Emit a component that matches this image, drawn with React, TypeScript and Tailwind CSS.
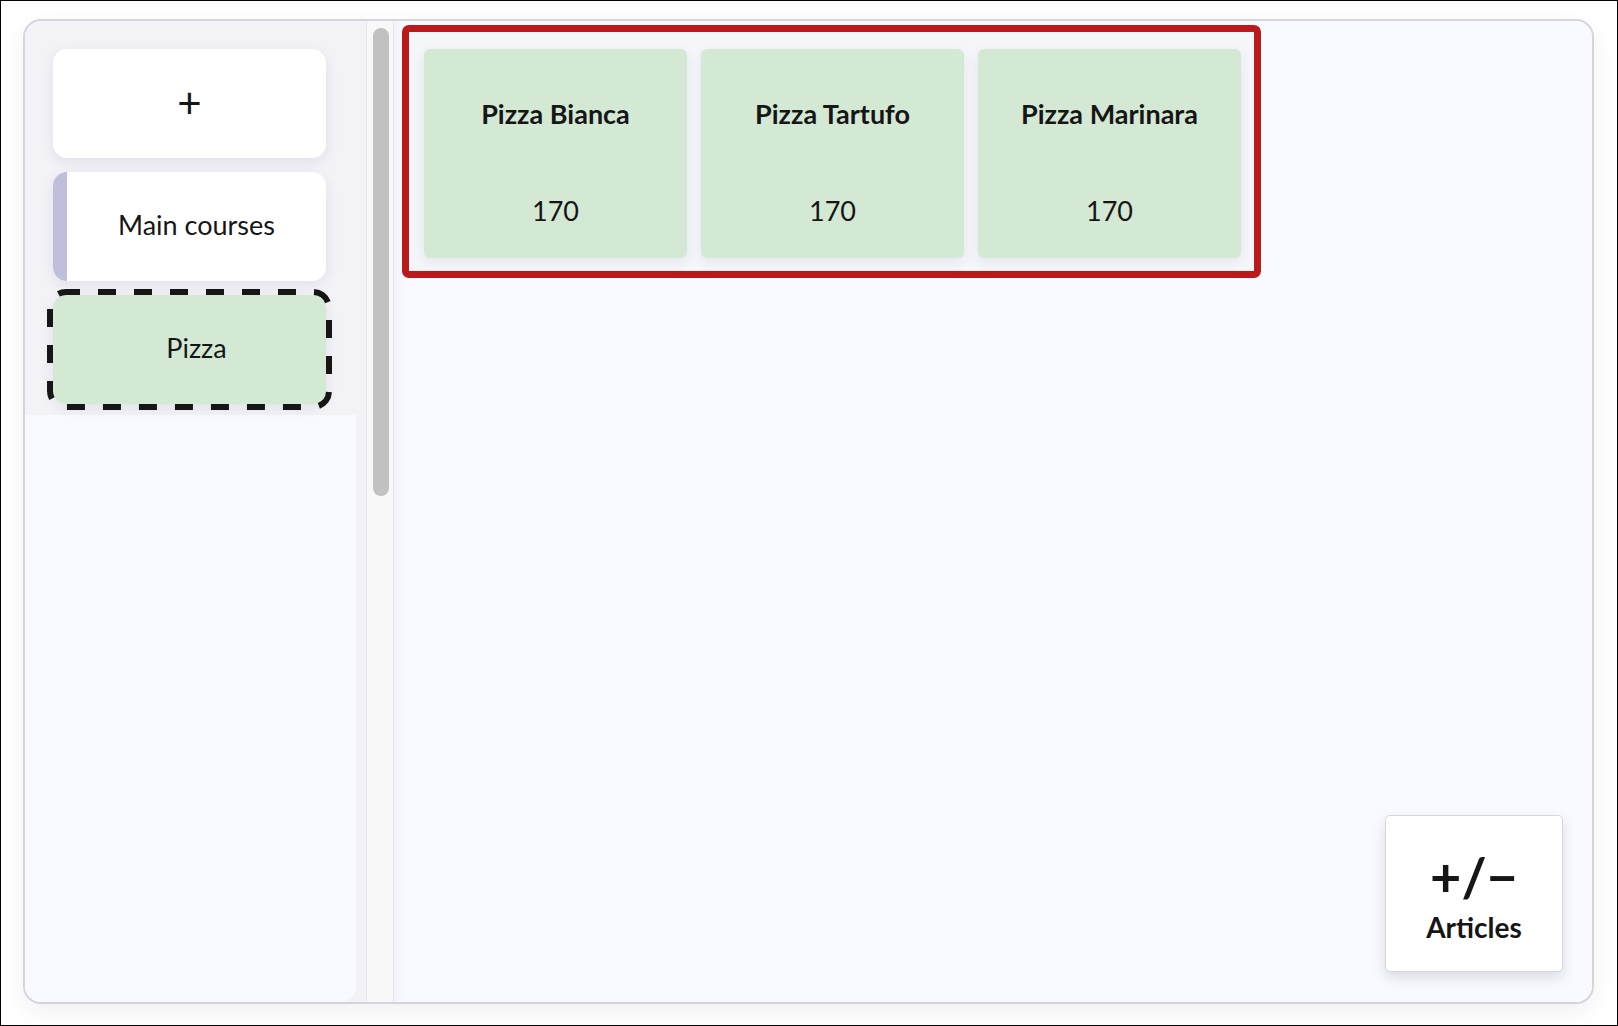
import React, { FC } from 'react';

interface IArticle {
  id: number;
  name: string;
  price: number;
}

interface ICategory {
  id: number;
  name: string;
  stripClass: string;
  bodyClass: string;
  selected?: boolean;
}

const articles: IArticle[] = [
  { id: 1, name: 'Pizza Bianca', price: 170 },
  { id: 2, name: 'Pizza Tartufo', price: 170 },
  { id: 3, name: 'Pizza Marinara', price: 170 },
];

const categories: ICategory[] = [
  {
    id: 1,
    name: 'Main courses',
    stripClass: 'bg-[#bfbfdb]',
    bodyClass: 'bg-white',
  },
  {
    id: 2,
    name: 'Pizza',
    stripClass: 'bg-[#d4e9d3]',
    bodyClass: 'bg-[#d4e9d3]',
    selected: true,
  },
];

// dashed frame drawn over the selected category
const DashedFrame: FC = () => (
  <svg
    className="pointer-events-none absolute -top-[6px] -left-[6px]"
    width="285"
    height="121"
    viewBox="0 0 285 121"
  >
    <rect
      x="3"
      y="3"
      width="279"
      height="115"
      rx="16"
      fill="none"
      stroke="#161616"
      strokeWidth="6"
      strokeDasharray="18 18"
      strokeDashoffset="4"
    />
  </svg>
);

const CategoryCard: FC<{ category: ICategory }> = ({ category }) => (
  <div className="relative h-[109px] w-[273px] shrink-0">
    <div
      className={`flex h-full w-full overflow-hidden rounded-[14px] shadow-[0_4px_14px_rgba(30,30,60,0.08)] ${category.bodyClass}`}
    >
      <div className={`w-[14px] shrink-0 ${category.stripClass}`} />
      <div className="flex flex-1 items-center justify-center pb-[3px] text-[27px] text-[#161616]">
        {category.name}
      </div>
    </div>
    {category.selected && <DashedFrame />}
  </div>
);

const ArticleCard: FC<{ article: IArticle }> = ({ article }) => (
  <div className="flex h-[209px] w-[263px] flex-col items-center rounded-[6px] bg-[#d4e9d3] pt-[48px] pb-[31px] text-[#161616] shadow-[0_4px_14px_rgba(30,30,60,0.07)]">
    <div className="text-[27px] font-bold leading-[34px]">{article.name}</div>
    <div className="mt-auto text-[27px] leading-[32px]">{article.price}</div>
  </div>
);

export default function App() {
  return (
    <div
      className="h-[1026px] w-[1618px] border border-black bg-white pt-[18px] pr-[23px] pb-[21px] pl-[22px]"
      style={{ fontFamily: 'Lato, "Noto Sans", sans-serif' }}
    >
      <div className="relative flex h-full overflow-hidden rounded-[18px] border-2 border-[#d4d4d9] bg-[#f9faff] shadow-[0_8px_24px_rgba(0,0,0,0.06)]">
        {/* categories column */}
        <div className="flex w-[341px] shrink-0 flex-col bg-[#f2f2f7]">
          <div className="flex flex-col gap-[14px] pt-[28px] pl-[28px]">
            <div className="flex h-[109px] w-[273px] items-center justify-center rounded-[14px] bg-white pb-[4px] text-[42px] leading-none text-[#161616] shadow-[0_4px_14px_rgba(30,30,60,0.08)]">
              +
            </div>
            {categories.map((category) => (
              <CategoryCard key={category.id} category={category} />
            ))}
          </div>
          <div className="mt-[11px] mr-[10px] flex-1 rounded-br-[16px] bg-[#f9faff]" />
        </div>

        {/* scrollbar */}
        <div className="w-[28px] shrink-0 border-x border-[#e6e6ea] bg-[#f8f8f8] px-[6px] pt-[7px]">
          <div className="h-[468px] w-[16px] rounded-full bg-[#c1c1c1]" />
        </div>

        {/* articles */}
        <div className="relative flex-1 bg-[#f9faff] pt-[4px] pl-[8px] shadow-[inset_10px_0_14px_-10px_rgba(0,0,0,0.06)]">
          <div className="inline-flex gap-[14px] rounded-[7px] border-[7px] border-[#bb1a1d] bg-[#f5f6fa] pt-[17px] pr-[13px] pb-[13px] pl-[15px]">
            {articles.map((article) => (
              <ArticleCard key={article.id} article={article} />
            ))}
          </div>

          <button
            type="button"
            className="absolute right-[29px] bottom-[30px] flex h-[157px] w-[178px] flex-col items-center justify-center rounded-[5px] border border-[#d6d6da] bg-white pt-[6px] text-[#161616] shadow-[0_6px_14px_rgba(0,0,0,0.12)]"
          >
            <span className="text-[54px] font-bold leading-[52px]">+/−</span>
            <span className="mt-[8px] text-[28px] font-bold leading-[32px]">
              Articles
            </span>
          </button>
        </div>
      </div>
    </div>
  );
}
